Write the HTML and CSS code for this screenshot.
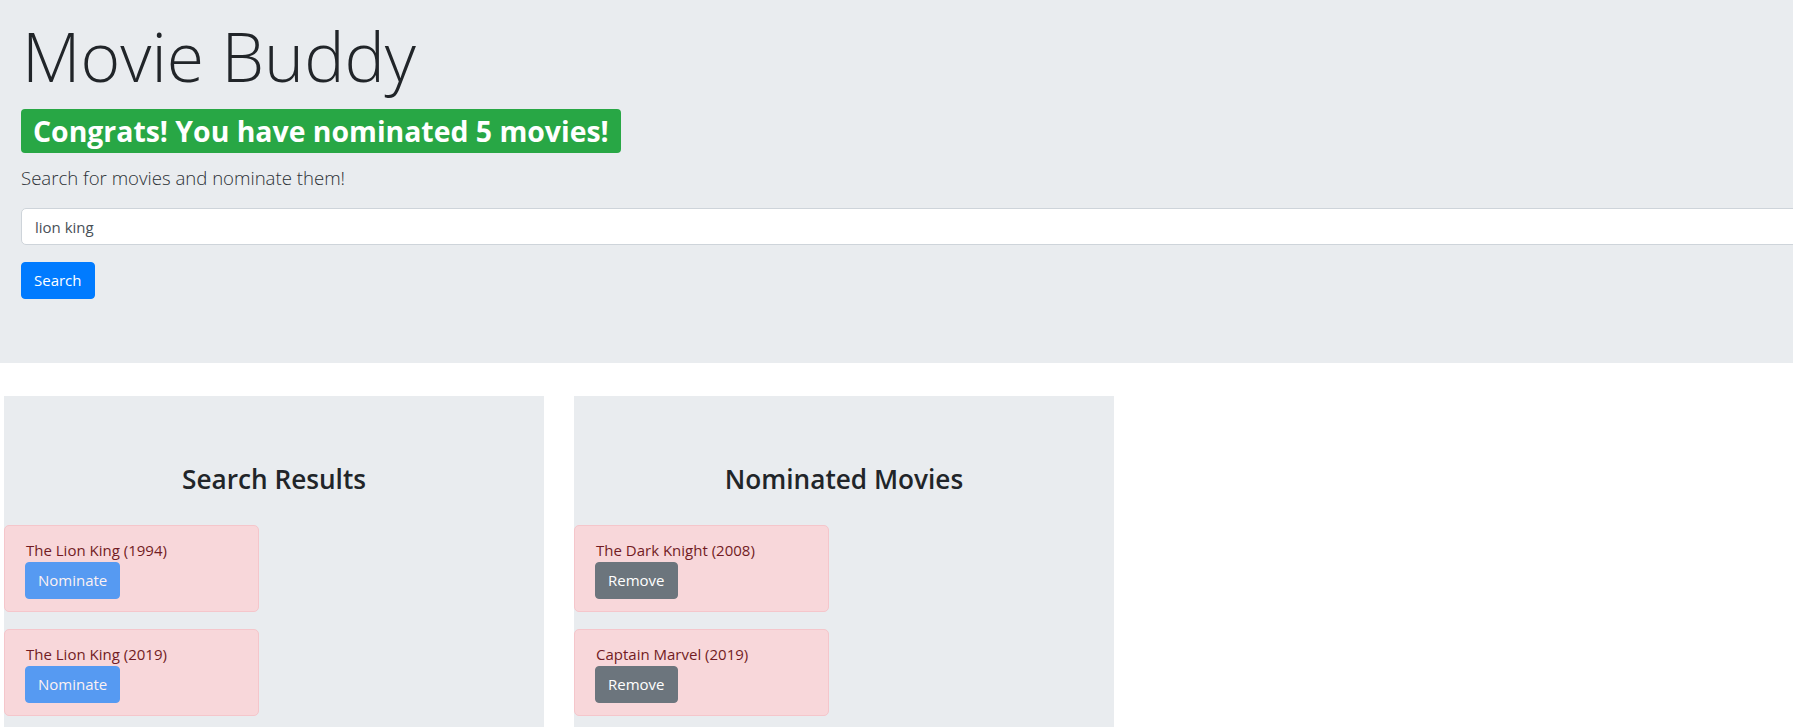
FILE: index.html
```html
<!DOCTYPE html>
<html lang="en">
<head>
<meta charset="utf-8">
<title>Movie Buddy</title>
<link rel="stylesheet" href="styles.css">
</head>
<body>
  <header class="jumbotron">
    <h1 class="title">Movie Buddy</h1>
    <div class="congrats"><span class="badge">Congrats! You have nominated 5 movies!</span></div>
    <p class="lead">Search for movies and nominate them!</p>
    <form class="search-form">
      <input class="search-input" type="text" value="lion king">
      <div><button class="btn btn-primary" type="button">Search</button></div>
    </form>
  </header>

  <main class="panels">
    <section class="panel">
      <h2 class="panel-title">Search Results</h2>
      <div class="cards">
        <div class="movie-card">
          <div class="movie-name">The Lion King (1994)</div>
          <button class="btn btn-primary is-disabled" type="button">Nominate</button>
        </div>
        <div class="movie-card">
          <div class="movie-name">The Lion King (2019)</div>
          <button class="btn btn-primary is-disabled" type="button">Nominate</button>
        </div>
      </div>
    </section>

    <section class="panel">
      <h2 class="panel-title">Nominated Movies</h2>
      <div class="cards">
        <div class="movie-card">
          <div class="movie-name">The Dark Knight (2008)</div>
          <button class="btn btn-secondary" type="button">Remove</button>
        </div>
        <div class="movie-card">
          <div class="movie-name">Captain Marvel (2019)</div>
          <button class="btn btn-secondary" type="button">Remove</button>
        </div>
      </div>
    </section>
  </main>
</body>
</html>
```
FILE: styles.css
```css
* { box-sizing: border-box; }

html, body {
  margin: 0;
  padding: 0;
  background: #ffffff;
  font-family: "Open Sans", "Noto Sans", sans-serif;
  color: #212529;
  overflow-x: hidden;
}

.jumbotron {
  background: #e9ecef;
  padding: 16px 0 64px 21px;
  overflow: hidden;
}

.title {
  margin: 0;
  font-size: 67.8px;
  font-weight: 300;
  line-height: 80px;
  color: #212529;
  padding-left: 1px;
}

.congrats {
  margin-top: 13px;
  height: 44px;
}

.badge {
  display: inline-block;
  background: #28a745;
  color: #ffffff;
  font-size: 28.4px;
  font-weight: 700;
  line-height: 30px;
  padding: 7px 12px;
  border-radius: 4px;
  white-space: nowrap;
}

.lead {
  margin: 11px 0 0;
  font-size: 18.6px;
  font-weight: 300;
  line-height: 28px;
  color: #2b3035;
}

.search-form {
  margin-top: 16px;
  display: flex;
  flex-direction: column;
  gap: 17px;
}

.search-input {
  display: block;
  width: 1800px;
  height: 37px;
  padding: 0 13px;
  border: 1px solid #ced4da;
  border-radius: 5px;
  background: #ffffff;
  font-family: inherit;
  font-size: 15px;
  color: #495057;
  outline: none;
}

.btn {
  display: inline-block;
  height: 37px;
  padding: 0 12px;
  border: 1px solid transparent;
  border-radius: 4px;
  font-family: inherit;
  font-size: 15px;
  line-height: 35px;
  color: #ffffff;
  cursor: pointer;
}

.btn-primary {
  background: #007bff;
  border-color: #007bff;
}

.btn-primary.is-disabled {
  opacity: 0.65;
}

.btn-secondary {
  background: #6c757d;
  border-color: #6c757d;
}

.panels {
  display: flex;
  gap: 30px;
  padding-left: 4px;
  margin-top: 33px;
  align-items: flex-start;
}

.panel {
  width: 540px;
  background: #e9ecef;
  padding: 67px 0 40px;
}

.panel-title {
  margin: 0;
  text-align: center;
  font-size: 26.2px;
  font-weight: 600;
  line-height: 32px;
  color: #212529;
}

.cards {
  margin-top: 30px;
  display: flex;
  flex-direction: column;
  gap: 17px;
  align-items: flex-start;
}

.movie-card {
  width: 255px;
  background: #f8d7da;
  border: 1px solid #f5c6cb;
  border-radius: 5px;
  padding: 12px 20px;
  color: #721c24;
}

.movie-name {
  font-size: 15px;
  line-height: 24px;
  padding-left: 1px;
  white-space: nowrap;
}
```
